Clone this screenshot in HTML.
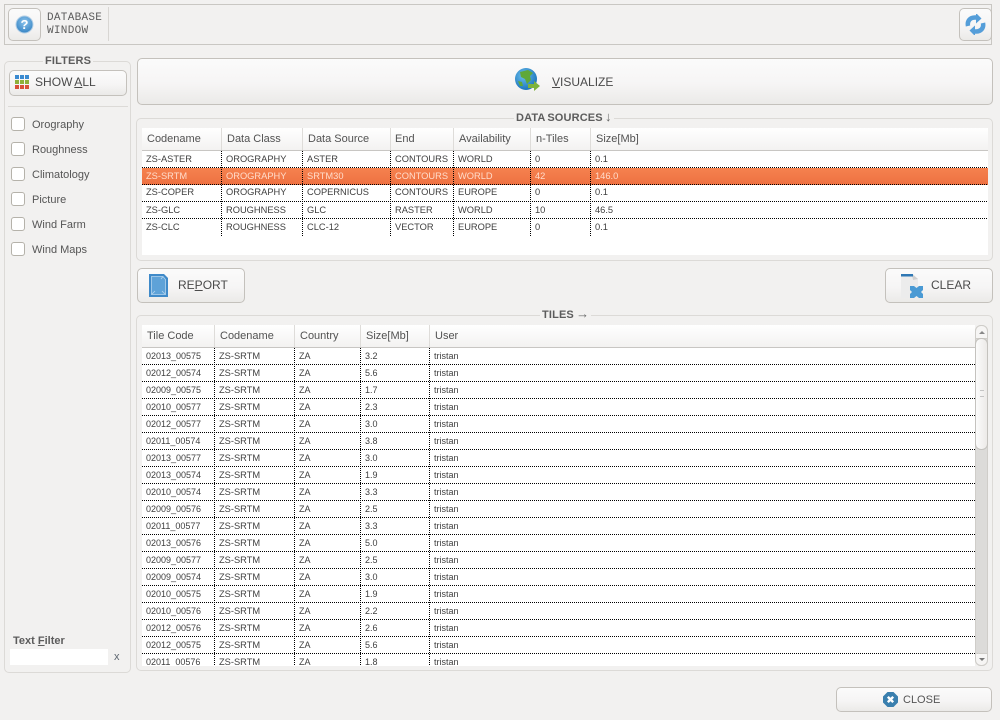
<!DOCTYPE html>
<html><head><meta charset="utf-8"><style>
html,body{margin:0;padding:0;width:1000px;height:720px;overflow:hidden;background:#f2f1f0;font-family:"Liberation Sans",sans-serif;color:#4a4a4a}
div,span,svg{position:absolute;box-sizing:border-box}
u{text-decoration:underline}
.panel{border:1px solid #dcdad7;border-radius:5px;background:#f2f1f0}
.btn{border:1px solid #c4c1bc;border-radius:5px;background:linear-gradient(#fbfbfb 0,#f6f5f5 55%,#ebeae8 100%);font-size:12px;color:#4a4a4a}
.title{font-size:11px;font-weight:bold;color:#5c5c5c;background:#f2f1f0;padding:0 2px;white-space:nowrap;line-height:13px;letter-spacing:.15px;word-spacing:-1px}
.arrow{position:static;font-size:13px;line-height:10px;font-weight:normal;color:#666}
.lbl{font-size:11px;color:#555;line-height:13px;white-space:nowrap}
.cb{left:11px;width:14px;height:14px;border:1px solid #b5b2aa;border-radius:3px;background:#fff}
.th{background:linear-gradient(#ffffff,#f3f2f1);height:23px;border-bottom:1px solid #c8c6c3}
.hc{font-size:11px;color:#525252;line-height:13px;white-space:nowrap}
.hs{width:1px;background:#dedcd9}
.r{height:17px;left:0;right:0;background:#fff;font-size:9px;line-height:16px;color:#404040}
.r::after{content:"";position:absolute;left:0;right:0;bottom:0;height:1px;background:repeating-linear-gradient(90deg,#000 0 1px,transparent 1px 2px)}
.r.last::after{display:none}
.r span{top:0;white-space:nowrap;line-height:16px}
.ds .r{font-size:9.3px}
.ts .r span:nth-child(2){font-size:9.3px}
.v{width:1px;background:repeating-linear-gradient(180deg,#000 0 1px,transparent 1px 2px)}
.sel{background:linear-gradient(#f5824f,#ee7041);color:#ffdccb}
</style></head><body>

<!-- top bar -->
<div style="left:4px;top:4px;width:988px;height:41px;border:1px solid #c9c7c3"></div>
<div class="btn" style="left:8px;top:8px;width:33px;height:33px"></div>
<svg style="left:14px;top:14px" width="21" height="21" viewBox="0 0 21 21"><defs><radialGradient id="q" cx=".5" cy=".35" r=".7"><stop offset="0" stop-color="#8cc4ec"/><stop offset="1" stop-color="#2f7fc1"/></radialGradient></defs><circle cx="10.500" cy="10.500" r="8.500" fill="url(#q)" stroke="#b4cfe6" stroke-width="1"/><text x="10.500" y="15" font-family="Liberation Sans" font-size="13" font-weight="bold" fill="#fff" text-anchor="middle">?</text></svg>
<div style="left:47px;top:12px;font-family:'Liberation Mono',monospace;font-size:11px;letter-spacing:.3px;line-height:13px;color:#5c5c5c">DATABASE<br>WINDOW</div>
<div style="left:108px;top:7px;width:1px;height:34px;background:#d8d6d3"></div>
<div class="btn" style="left:959px;top:8px;width:33px;height:33px"></div>
<svg style="left:965px;top:14px" width="21" height="21" viewBox="0 0 21 21">
<path d="M3 12 C2 7 5 3.500 10 3.500 L12 3.500" fill="none" stroke="#559ed9" stroke-width="4.500"/><path d="M11 -1 L11 9.500 L16.500 4.500 Z" fill="#559ed9"/>
<path d="M18 9 C19 14 16 17.500 11 17.500 L9 17.500" fill="none" stroke="#559ed9" stroke-width="4.500"/><path d="M10 11.500 L10 22 L4.500 16.500 Z" fill="#559ed9"/></svg>

<!-- filters -->
<div class="panel" style="left:4px;top:61px;width:127px;height:612px"></div>
<div class="title" style="left:43px;top:55px">FILTERS</div>
<div class="btn" style="left:9px;top:70px;width:118px;height:26px"></div>
<svg style="left:15px;top:75px" width="14" height="14" viewBox="0 0 14 14">
<g fill="#3a8ad0"><rect x="0" y="0" width="4" height="4"/><rect x="5" y="0" width="4" height="4"/><rect x="10" y="0" width="4" height="4"/></g>
<g fill="#8fb03a"><rect x="0" y="5" width="4" height="4"/><rect x="5" y="5" width="4" height="4"/><rect x="10" y="5" width="4" height="4"/></g>
<g fill="#d8503a"><rect x="0" y="10" width="4" height="4"/><rect x="5" y="10" width="4" height="4"/><rect x="10" y="10" width="4" height="4"/></g></svg>
<div style="left:35px;top:75px;font-size:12px;line-height:14px;white-space:nowrap;color:#4a4a4a;letter-spacing:.05px;word-spacing:-1px">SHOW <u>A</u>LL</div>
<div style="left:8px;top:106px;width:120px;height:1px;background:#dcdad7"></div>

<div class="cb" style="top:117px"></div><div class="lbl" style="left:32px;top:118px;top:119px">Orography</div>
<div class="cb" style="top:142px"></div><div class="lbl" style="left:32px;top:144px">Roughness</div>
<div class="cb" style="top:167px"></div><div class="lbl" style="left:32px;top:169px">Climatology</div>
<div class="cb" style="top:192px"></div><div class="lbl" style="left:32px;top:194px">Picture</div>
<div class="cb" style="top:217px"></div><div class="lbl" style="left:32px;top:219px">Wind Farm</div>
<div class="cb" style="top:242px"></div><div class="lbl" style="left:32px;top:244px">Wind Maps</div>

<div style="left:13px;top:635px;font-size:11px;font-weight:bold;line-height:13px;color:#5c5c5c;white-space:nowrap">Text <u>F</u>ilter</div>
<div style="left:10px;top:649px;width:98px;height:16px;background:#fff"></div>
<div style="left:114px;top:651px;font-size:11px;line-height:13px;color:#5d6670">x</div>

<!-- visualize -->
<div class="btn" style="left:137px;top:58px;width:856px;height:47px"></div>
<svg style="left:514px;top:67px" width="27" height="27" viewBox="0 0 27 27"><defs><radialGradient id="g" cx=".4" cy=".35" r=".7"><stop offset="0" stop-color="#6cc0ee"/><stop offset="1" stop-color="#1670b8"/></radialGradient></defs><circle cx="12" cy="12" r="11" fill="url(#g)"/><path d="M6 5 L14 3 L19 6 L16 9 L17 13 L13 17 L11 12 L7 10 Z" fill="#5fa83a"/><path d="M4 14 L8 15 L9 19 L6 19 Z" fill="#5fa83a"/><path d="M14 17 L20 17 L20 14 L26 19 L20 24 L20 21 L14 21 Z" fill="#7db33c"/></svg>
<div style="left:552px;top:75px;font-size:12px;line-height:14px;color:#4a4a4a;white-space:nowrap"><u>V</u>ISUALIZE</div>

<!-- data sources -->
<div class="panel" style="left:136px;top:118px;width:857px;height:143px"></div>
<div class="title" style="left:514px;top:112px">DATA SOURCES <span class="arrow">&#8595;</span></div>
<div class="ds" style="left:142px;top:128px;width:846px;height:127px;background:#fff;overflow:hidden">
 <div class="th" style="left:0;top:0;width:846px"></div>
 <div class="hc" style="left:5px;top:5px">Codename</div>
 <div class="hc" style="left:85px;top:5px">Data Class</div>
 <div class="hc" style="left:166px;top:5px">Data Source</div>
 <div class="hc" style="left:253px;top:5px">End</div>
 <div class="hc" style="left:317px;top:5px">Availability</div>
 <div class="hc" style="left:394px;top:5px">n-Tiles</div>
 <div class="hc" style="left:454px;top:5px">Size[Mb]</div>
 <div class="hs" style="left:79px;top:0;height:22px"></div><div class="hs" style="left:160px;top:0;height:22px"></div><div class="hs" style="left:248px;top:0;height:22px"></div><div class="hs" style="left:311px;top:0;height:22px"></div><div class="hs" style="left:388px;top:0;height:22px"></div><div class="hs" style="left:448px;top:0;height:22px"></div>
 <div class="r" style="top:23px"><span style="left:4px">ZS-ASTER</span><span style="left:84px">OROGRAPHY</span><span style="left:165px">ASTER</span><span style="left:253px">CONTOURS</span><span style="left:316px">WORLD</span><span style="left:393px">0</span><span style="left:453px">0.1</span></div>
 <div class="r sel" style="top:40px"><span style="left:4px">ZS-SRTM</span><span style="left:84px">OROGRAPHY</span><span style="left:165px">SRTM30</span><span style="left:253px">CONTOURS</span><span style="left:316px">WORLD</span><span style="left:393px">42</span><span style="left:453px">146.0</span></div>
 <div class="r" style="top:57px"><span style="left:4px;top:-1px">ZS-COPER</span><span style="left:84px;top:-1px">OROGRAPHY</span><span style="left:165px;top:-1px">COPERNICUS</span><span style="left:253px;top:-1px">CONTOURS</span><span style="left:316px;top:-1px">EUROPE</span><span style="left:393px;top:-1px">0</span><span style="left:453px;top:-1px">0.1</span></div>
 <div class="r" style="top:74px"><span style="left:4px">ZS-GLC</span><span style="left:84px">ROUGHNESS</span><span style="left:165px">GLC</span><span style="left:253px">RASTER</span><span style="left:316px">WORLD</span><span style="left:393px">10</span><span style="left:453px">46.5</span></div>
 <div class="r last" style="top:91px"><span style="left:4px">ZS-CLC</span><span style="left:84px">ROUGHNESS</span><span style="left:165px">CLC-12</span><span style="left:253px">VECTOR</span><span style="left:316px">EUROPE</span><span style="left:393px">0</span><span style="left:453px">0.1</span></div>
 <div class="v" style="left:79px;top:23px;height:85px"></div><div class="v" style="left:160px;top:23px;height:85px"></div><div class="v" style="left:248px;top:23px;height:85px"></div><div class="v" style="left:311px;top:23px;height:85px"></div><div class="v" style="left:388px;top:23px;height:85px"></div><div class="v" style="left:448px;top:23px;height:85px"></div>
</div>

<!-- report / clear -->
<div class="btn" style="left:137px;top:268px;width:108px;height:35px"></div>
<svg style="left:149px;top:273px" width="20" height="24" viewBox="0 0 20 24"><path d="M0 1 H15 L19 5 V24 H0 Z" fill="#3f8ac9"/><path d="M2.500 3.500 H14 L16.500 6.500 V21.500 H2.500 Z" fill="#5ea2d8" stroke="#b5d5ee" stroke-width=".8"/><path d="M2.500 21.500 L6 18 M16.500 21.500 L13 18 M14 3.500 L12 6" stroke="#b5d5ee" stroke-width=".8"/></svg>
<div style="left:178px;top:278px;font-size:12px;line-height:14px;color:#4a4a4a;white-space:nowrap">RE<u>P</u>ORT</div>
<div class="btn" style="left:885px;top:268px;width:108px;height:35px"></div>
<svg style="left:901px;top:273px" width="23" height="26" viewBox="0 0 23 26"><path d="M0 1 H12 L17 6 V25 H0 Z" fill="#ececec"/><path d="M11 1 L17 6 L12 7 Z" fill="#cfcfcf"/><rect x="0" y="1" width="12" height="2.500" fill="#2f78b4"/><path d="M9 13 H13 L15.500 15 L18 13 H22 V17 L20 19 L22 21 V25 H18 L15.500 23 L13 25 H9 V21 L11 19 L9 17 Z" fill="#4a9ad4"/></svg>
<div style="left:931px;top:278px;font-size:12px;line-height:14px;color:#4a4a4a;white-space:nowrap">CLEAR</div>

<!-- tiles -->
<div class="panel" style="left:136px;top:315px;width:857px;height:356px"></div>
<div class="title" style="left:540px;top:309px">TILES <span class="arrow">&#8594;</span></div>
<div class="ts" style="left:142px;top:325px;width:833px;height:341px;background:#fff;overflow:hidden">
 <div class="th" style="left:0;top:0;width:833px"></div>
 <div class="hc" style="left:5px;top:5px">Tile Code</div>
 <div class="hc" style="left:78px;top:5px">Codename</div>
 <div class="hc" style="left:158px;top:5px">Country</div>
 <div class="hc" style="left:224px;top:5px">Size[Mb]</div>
 <div class="hc" style="left:293px;top:5px">User</div>
 <div class="hs" style="left:72px;top:0;height:22px"></div><div class="hs" style="left:152px;top:0;height:22px"></div><div class="hs" style="left:218px;top:0;height:22px"></div><div class="hs" style="left:287px;top:0;height:22px"></div>
 <div class="r" style="top:23px"><span style="left:4px">02013_00575</span><span style="left:77px">ZS-SRTM</span><span style="left:157px">ZA</span><span style="left:223px">3.2</span><span style="left:292px">tristan</span></div>
 <div class="r" style="top:40px"><span style="left:4px">02012_00574</span><span style="left:77px">ZS-SRTM</span><span style="left:157px">ZA</span><span style="left:223px">5.6</span><span style="left:292px">tristan</span></div>
 <div class="r" style="top:57px"><span style="left:4px">02009_00575</span><span style="left:77px">ZS-SRTM</span><span style="left:157px">ZA</span><span style="left:223px">1.7</span><span style="left:292px">tristan</span></div>
 <div class="r" style="top:74px"><span style="left:4px">02010_00577</span><span style="left:77px">ZS-SRTM</span><span style="left:157px">ZA</span><span style="left:223px">2.3</span><span style="left:292px">tristan</span></div>
 <div class="r" style="top:91px"><span style="left:4px">02012_00577</span><span style="left:77px">ZS-SRTM</span><span style="left:157px">ZA</span><span style="left:223px">3.0</span><span style="left:292px">tristan</span></div>
 <div class="r" style="top:108px"><span style="left:4px">02011_00574</span><span style="left:77px">ZS-SRTM</span><span style="left:157px">ZA</span><span style="left:223px">3.8</span><span style="left:292px">tristan</span></div>
 <div class="r" style="top:125px"><span style="left:4px">02013_00577</span><span style="left:77px">ZS-SRTM</span><span style="left:157px">ZA</span><span style="left:223px">3.0</span><span style="left:292px">tristan</span></div>
 <div class="r" style="top:142px"><span style="left:4px">02013_00574</span><span style="left:77px">ZS-SRTM</span><span style="left:157px">ZA</span><span style="left:223px">1.9</span><span style="left:292px">tristan</span></div>
 <div class="r" style="top:159px"><span style="left:4px">02010_00574</span><span style="left:77px">ZS-SRTM</span><span style="left:157px">ZA</span><span style="left:223px">3.3</span><span style="left:292px">tristan</span></div>
 <div class="r" style="top:176px"><span style="left:4px">02009_00576</span><span style="left:77px">ZS-SRTM</span><span style="left:157px">ZA</span><span style="left:223px">2.5</span><span style="left:292px">tristan</span></div>
 <div class="r" style="top:193px"><span style="left:4px">02011_00577</span><span style="left:77px">ZS-SRTM</span><span style="left:157px">ZA</span><span style="left:223px">3.3</span><span style="left:292px">tristan</span></div>
 <div class="r" style="top:210px"><span style="left:4px">02013_00576</span><span style="left:77px">ZS-SRTM</span><span style="left:157px">ZA</span><span style="left:223px">5.0</span><span style="left:292px">tristan</span></div>
 <div class="r" style="top:227px"><span style="left:4px">02009_00577</span><span style="left:77px">ZS-SRTM</span><span style="left:157px">ZA</span><span style="left:223px">2.5</span><span style="left:292px">tristan</span></div>
 <div class="r" style="top:244px"><span style="left:4px">02009_00574</span><span style="left:77px">ZS-SRTM</span><span style="left:157px">ZA</span><span style="left:223px">3.0</span><span style="left:292px">tristan</span></div>
 <div class="r" style="top:261px"><span style="left:4px">02010_00575</span><span style="left:77px">ZS-SRTM</span><span style="left:157px">ZA</span><span style="left:223px">1.9</span><span style="left:292px">tristan</span></div>
 <div class="r" style="top:278px"><span style="left:4px">02010_00576</span><span style="left:77px">ZS-SRTM</span><span style="left:157px">ZA</span><span style="left:223px">2.2</span><span style="left:292px">tristan</span></div>
 <div class="r" style="top:295px"><span style="left:4px">02012_00576</span><span style="left:77px">ZS-SRTM</span><span style="left:157px">ZA</span><span style="left:223px">2.6</span><span style="left:292px">tristan</span></div>
 <div class="r" style="top:312px"><span style="left:4px">02012_00575</span><span style="left:77px">ZS-SRTM</span><span style="left:157px">ZA</span><span style="left:223px">5.6</span><span style="left:292px">tristan</span></div>
 <div class="r last" style="top:329px"><span style="left:4px">02011_00576</span><span style="left:77px">ZS-SRTM</span><span style="left:157px">ZA</span><span style="left:223px">1.8</span><span style="left:292px">tristan</span></div>
 <div class="v" style="left:72px;top:23px;height:320px"></div><div class="v" style="left:152px;top:23px;height:320px"></div><div class="v" style="left:218px;top:23px;height:320px"></div><div class="v" style="left:287px;top:23px;height:320px"></div>
</div>
<!-- scrollbar -->
<div style="left:975px;top:325px;width:13px;height:341px;background:#dcdbd9;border:1px solid #cfcdc9;border-radius:6px"></div>
<div style="left:975px;top:325px;width:13px;height:14px;background:#f6f5f4;border:1px solid #cfcdc9;border-radius:6px 6px 0 0"></div>
<div style="left:975px;top:653px;width:13px;height:13px;background:#f6f5f4;border:1px solid #cfcdc9;border-radius:0 0 6px 6px"></div>
<div style="left:975px;top:338px;width:13px;height:112px;background:linear-gradient(90deg,#fbfbfb,#eceae8);border:1px solid #c4c2be;border-radius:6px"></div>
<div style="left:979px;top:331px;width:0;height:0;border-left:3px solid transparent;border-right:3px solid transparent;border-bottom:3px solid #888"></div>
<div style="left:979px;top:658px;width:0;height:0;border-left:3px solid transparent;border-right:3px solid transparent;border-top:3px solid #777"></div>
<div style="left:980px;top:390px;width:4px;height:7px;border-top:1px solid #c4c4c4;border-bottom:1px solid #c4c4c4"></div>

<!-- close -->
<div class="btn" style="left:836px;top:687px;width:156px;height:25px"></div>
<svg style="left:883px;top:692px" width="15" height="15" viewBox="0 0 15 15"><path d="M4.500 0 H10.500 L15 4.500 V10.500 L10.500 15 H4.500 L0 10.500 V4.500 Z" fill="#3a7fae"/><path d="M4.800 4.800 L10.200 10.200 M10.200 4.800 L4.800 10.200" stroke="#fff" stroke-width="2.400"/></svg>
<div style="left:903px;top:694px;font-size:11px;line-height:13px;color:#555;white-space:nowrap">CLOSE</div>
</body></html>
